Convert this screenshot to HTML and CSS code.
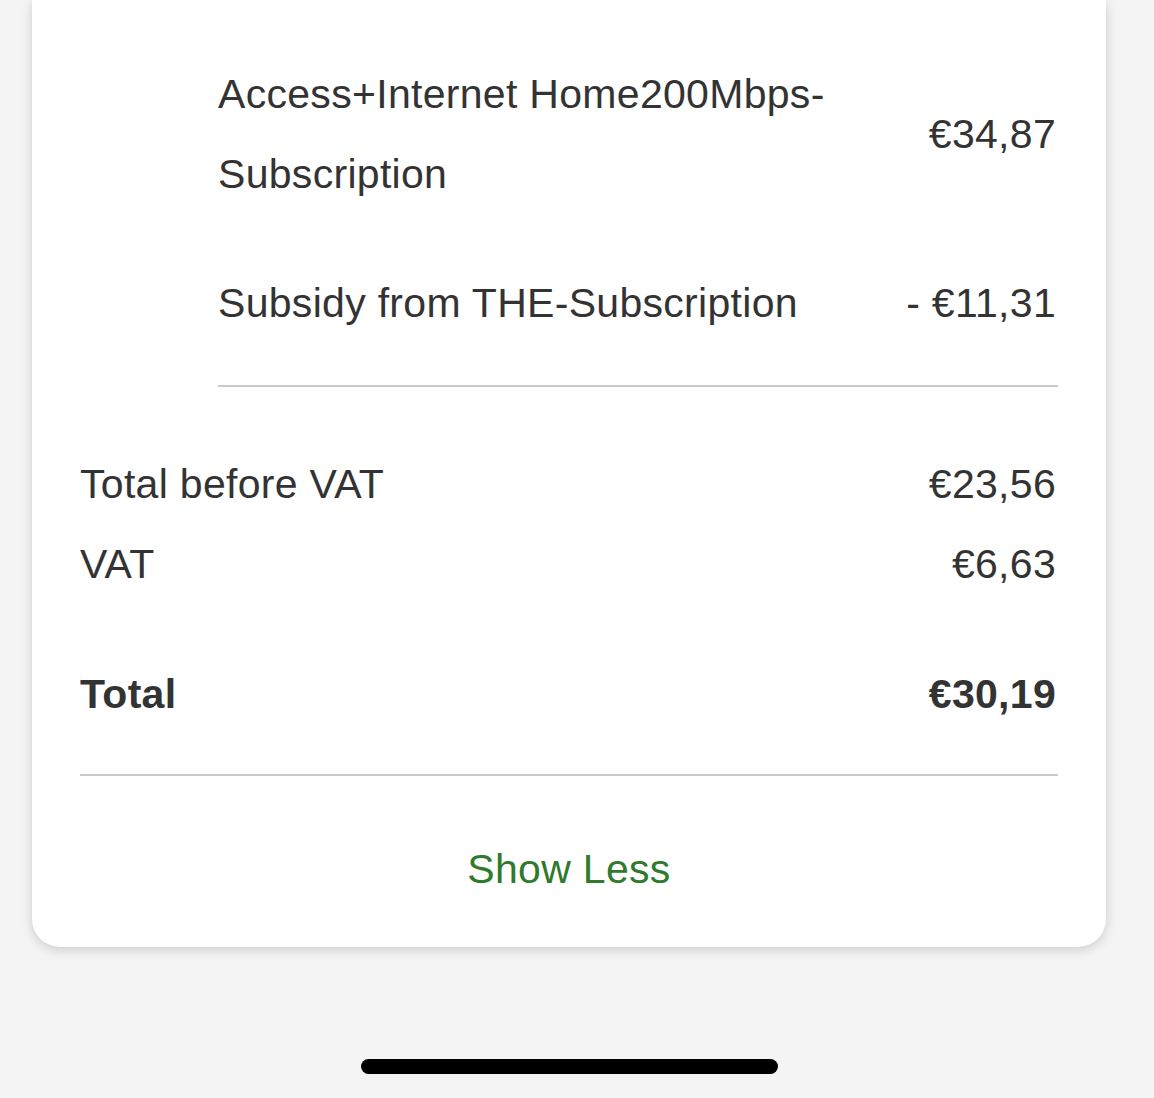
FILE: index.html
```html
<!DOCTYPE html>
<html lang="en">
<head>
<meta charset="utf-8">
<title>Invoice details</title>
<link rel="stylesheet" href="styles.css">
</head>
<body>
<div class="screen">
  <section class="card">
    <div class="items">
      <div class="row item-first">
        <div class="label">Access+Internet Home200Mbps-<br>Subscription</div>
        <div class="amount">€34,87</div>
      </div>
      <div class="row item-second">
        <div class="label">Subsidy from THE-Subscription</div>
        <div class="amount">- €11,31</div>
      </div>
      <hr class="divider">
    </div>
    <div class="row sum-first">
      <div class="label">Total before VAT</div>
      <div class="amount">€23,56</div>
    </div>
    <div class="row">
      <div class="label">VAT</div>
      <div class="amount">€6,63</div>
    </div>
    <div class="row total">
      <div class="label">Total</div>
      <div class="amount">€30,19</div>
    </div>
    <hr class="divider total-divider">
    <div class="toggle">Show Less</div>
  </section>
  <div class="home-indicator"></div>
</div>
</body>
</html>
```
FILE: styles.css
```css
html, body {
  margin: 0;
  padding: 0;
  background: #f4f4f4;
}
body {
  font-family: "Liberation Sans", Arial, Helvetica, sans-serif;
  color: #333333;
  width: 1154px;
  height: 1098px;
  overflow: hidden;
}
.screen {
  box-sizing: border-box;
  display: flex;
  flex-direction: column;
  align-items: center;
  height: 1098px;
  padding-right: 16px;
}
.card {
  box-sizing: border-box;
  width: 1074px;
  background: #ffffff;
  border-radius: 0 0 28px 28px;
  box-shadow: 0 3px 12px rgba(0, 0, 0, 0.16);
  padding: 54px 48px 38px 48px;
  display: flex;
  flex-direction: column;
}
.items {
  margin-left: 138px;
  display: flex;
  flex-direction: column;
}
.row {
  display: flex;
  justify-content: space-between;
  align-items: center;
  font-size: 41px;
  line-height: 80px;
  letter-spacing: 0.3px;
}
.amount {
  text-align: right;
  padding-right: 2px;
  white-space: nowrap;
}
.item-second {
  margin-top: 49px;
}
.divider {
  border: none;
  height: 2px;
  background: #c9c9c9;
  margin: 42px 0 0 0;
}
.sum-first {
  margin-top: 57px;
}
.total {
  margin-top: 50px;
  font-weight: 700;
}
.total-divider {
  margin-top: 40px;
}
.toggle {
  margin-top: 53px;
  text-align: center;
  font-size: 41px;
  line-height: 80px;
  letter-spacing: 0.3px;
  color: #2f7a2c;
}
.home-indicator {
  margin-top: 112px;
  width: 417px;
  height: 15px;
  border-radius: 8px;
  background: #000000;
}
```
